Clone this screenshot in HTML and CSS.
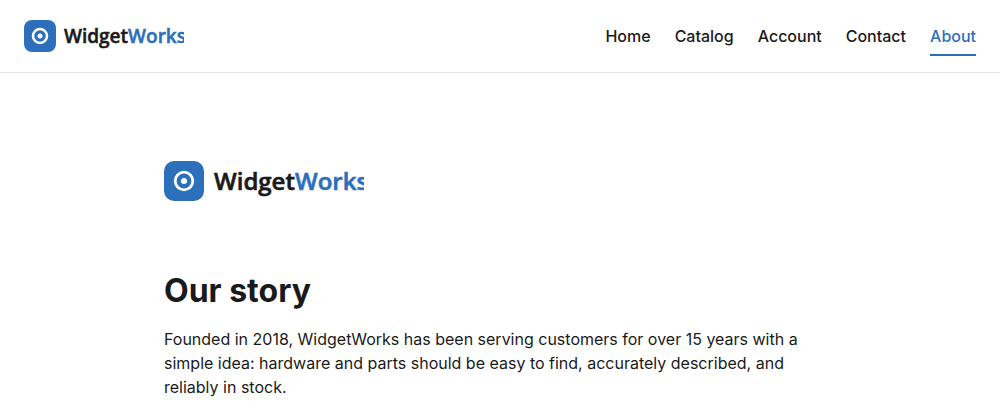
FILE: index.html
```
<!DOCTYPE html>
<html lang="en">
<head>
<meta charset="utf-8">
<meta name="viewport" content="width=device-width, initial-scale=1">
<title>About – WidgetWorks</title>
<link rel="stylesheet" href="styles.css">
</head>
<body>
<header class="site-header">
  <a class="brand" href="#" aria-label="WidgetWorks home">
    <svg class="logo logo-small" width="160" height="32" viewBox="0 0 160 32">
      <rect width="32" height="32" rx="8" fill="#2c6fbb"/>
      <circle cx="16" cy="16" r="7" fill="none" stroke="#fff" stroke-width="2.5"/>
      <circle cx="16" cy="16" r="2.5" fill="#fff"/>
      <text class="logo-text" x="40" y="23" stroke-width="0.5">Widget<tspan class="logo-accent">Works</tspan></text>
    </svg>
  </a>
  <nav class="site-nav" aria-label="Main">
    <a class="nav-link" href="#">Home</a>
    <a class="nav-link" href="#">Catalog</a>
    <a class="nav-link" href="#">Account</a>
    <a class="nav-link" href="#">Contact</a>
    <a class="nav-link nav-link-active" href="#" aria-current="page">About</a>
  </nav>
</header>
<main class="content">
  <svg class="logo logo-large" width="200" height="40" viewBox="0 0 200 40" role="img" aria-label="WidgetWorks">
    <rect width="40" height="40" rx="10" fill="#2c6fbb"/>
    <circle cx="20" cy="20" r="8.8" fill="none" stroke="#fff" stroke-width="2.8"/>
    <circle cx="20" cy="20" r="3" fill="#fff"/>
    <text class="logo-text" x="50" y="29" stroke-width="0.6">Widget<tspan class="logo-accent">Works</tspan></text>
  </svg>
  <section class="story">
    <h1 class="story-title">Our story</h1>
    <p class="story-text">Founded in 2018, WidgetWorks has been serving customers for over 15 years with a simple idea: hardware and parts should be easy to find, accurately described, and reliably in stock.</p>
  </section>
</main>
</body>
</html>
```
FILE: styles.css
```
* { box-sizing: border-box; }
body {
  margin: 0;
  background: #fff;
  color: #1a1a1a;
  font-family: Inter, sans-serif;
  font-size: 16px;
  line-height: 24px;
}
.site-header {
  display: flex;
  align-items: center;
  justify-content: space-between;
  padding: 16px 24px;
  border-bottom: 1px solid #e2e4e8;
}
.brand { display: flex; }
.logo { display: block; overflow: hidden; }
.logo-text {
  font-family: "Open Sans", sans-serif;
  font-weight: 600;
  fill: #1a1a1a;
  stroke: #1a1a1a;
}
.logo-small { font-size: 19px; }
.logo-large { font-size: 24px; }
.logo-accent {
  fill: #2c6fbb;
  stroke: #2c6fbb;
}
.site-nav { display: flex; gap: 24px; }
.nav-link {
  padding: 8px 0 6px;
  border-bottom: 2px solid transparent;
  color: #1a1a1a;
  font-weight: 500;
  text-decoration: none;
}
.nav-link-active {
  border-bottom-color: #2c6fbb;
  color: #2c6fbb;
}
.content {
  max-width: 720px;
  margin: 0 auto;
  padding: 88px 24px 16px;
}
.story { margin-top: 72px; }
.story-title {
  margin: 0 0 18px;
  font-size: 32px;
  font-weight: 700;
  line-height: 36px;
}
.story-text { margin: 0; }
```
